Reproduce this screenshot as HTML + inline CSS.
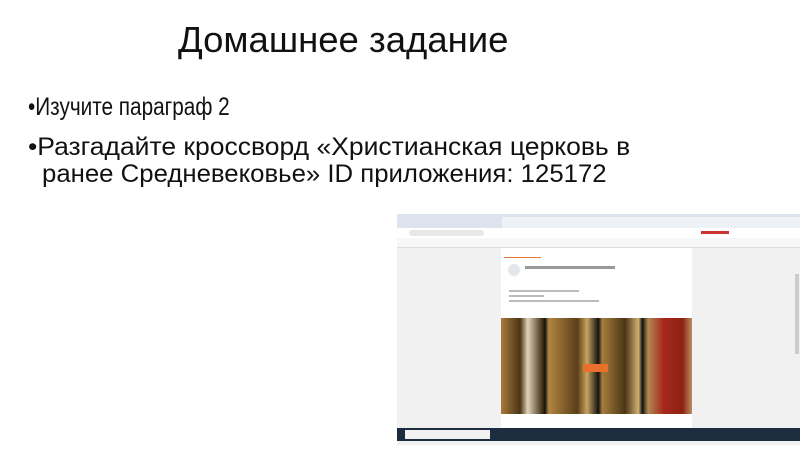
<html><head><style>
body{margin:0;width:800px;height:450px;background:#fff;position:relative;overflow:hidden;font-family:"Liberation Sans",sans-serif}
.a{position:absolute}
.t{left:178px;top:19px;font-size:36.5px;color:#111}
.b{font-size:25px;color:#111;left:28px;transform-origin:0 0;white-space:nowrap}
</style></head><body>
<div class="a t">Домашнее задание</div>
<div class="a b" style="top:93px;transform:scaleX(0.83)">•Изучите параграф 2</div>
<div class="a b" style="top:133px;transform:scaleX(1.06)">•Разгадайте кроссворд «Христианская церковь в</div>
<div class="a b" style="top:160px;left:42px;transform:scaleX(1.03)">ранее Средневековье» ID приложения: 125172</div>
<div class="a" style="left:397px;top:214px;width:403px;height:231px;background:#f1f1f1;overflow:hidden">
 <div class="a" style="left:0;top:0;width:403px;height:14px;background:#dde4ee"></div>
 <div class="a" style="left:105px;top:3px;width:300px;height:11px;background:#eef2f7"></div>
 <div class="a" style="left:0;top:14px;width:403px;height:10px;background:#fff"></div>
 <div class="a" style="left:12px;top:16px;width:75px;height:6px;background:#e8e8e8;border-radius:3px"></div>
 <div class="a" style="left:304px;top:17px;width:28px;height:3px;background:#c33"></div>
 <div class="a" style="left:0;top:24px;width:403px;height:9px;background:#f7f7f7;border-bottom:1px solid #ddd"></div>
 <div class="a" style="left:104px;top:34px;width:191px;height:180px;background:#fff"></div>
 <div class="a" style="left:107px;top:43px;width:37px;height:1px;background:#e87a3a"></div>
 <div class="a" style="left:111px;top:50px;width:12px;height:12px;border-radius:50%;background:#e3e6ea"></div>
 <div class="a" style="left:128px;top:52px;width:90px;height:3px;background:#999"></div>
 <div class="a" style="left:112px;top:76px;width:70px;height:2px;background:#bbb"></div>
 <div class="a" style="left:112px;top:81px;width:35px;height:2px;background:#bbb"></div>
 <div class="a" style="left:112px;top:86px;width:90px;height:2px;background:#bbb"></div>
 <div class="a" style="left:104px;top:104px;width:191px;height:96px;background:linear-gradient(90deg,#a97a3a 0,#4b3416 10%,#e0d4b8 14%,#3a2a12 22%,#111 23%,#b28540 25%,#5a3f1a 40%,#c8a460 45%,#111 51%,#a77c3c 53%,#4a3616 65%,#d2b070 72%,#111 74%,#b08a50 77%,#a8281c 85%,#8d2014 95%,#b89060 100%)"></div>
 <div class="a" style="left:186px;top:150px;width:25px;height:8px;background:#e8702a"></div>
 <div class="a" style="left:0;top:214px;width:403px;height:13px;background:#1e2c3f"></div>
 <div class="a" style="left:8px;top:216px;width:85px;height:9px;background:#f2f2f2"></div>
 <div class="a" style="left:398px;top:60px;width:4px;height:80px;background:#ccc"></div>
</div>
</body></html>
